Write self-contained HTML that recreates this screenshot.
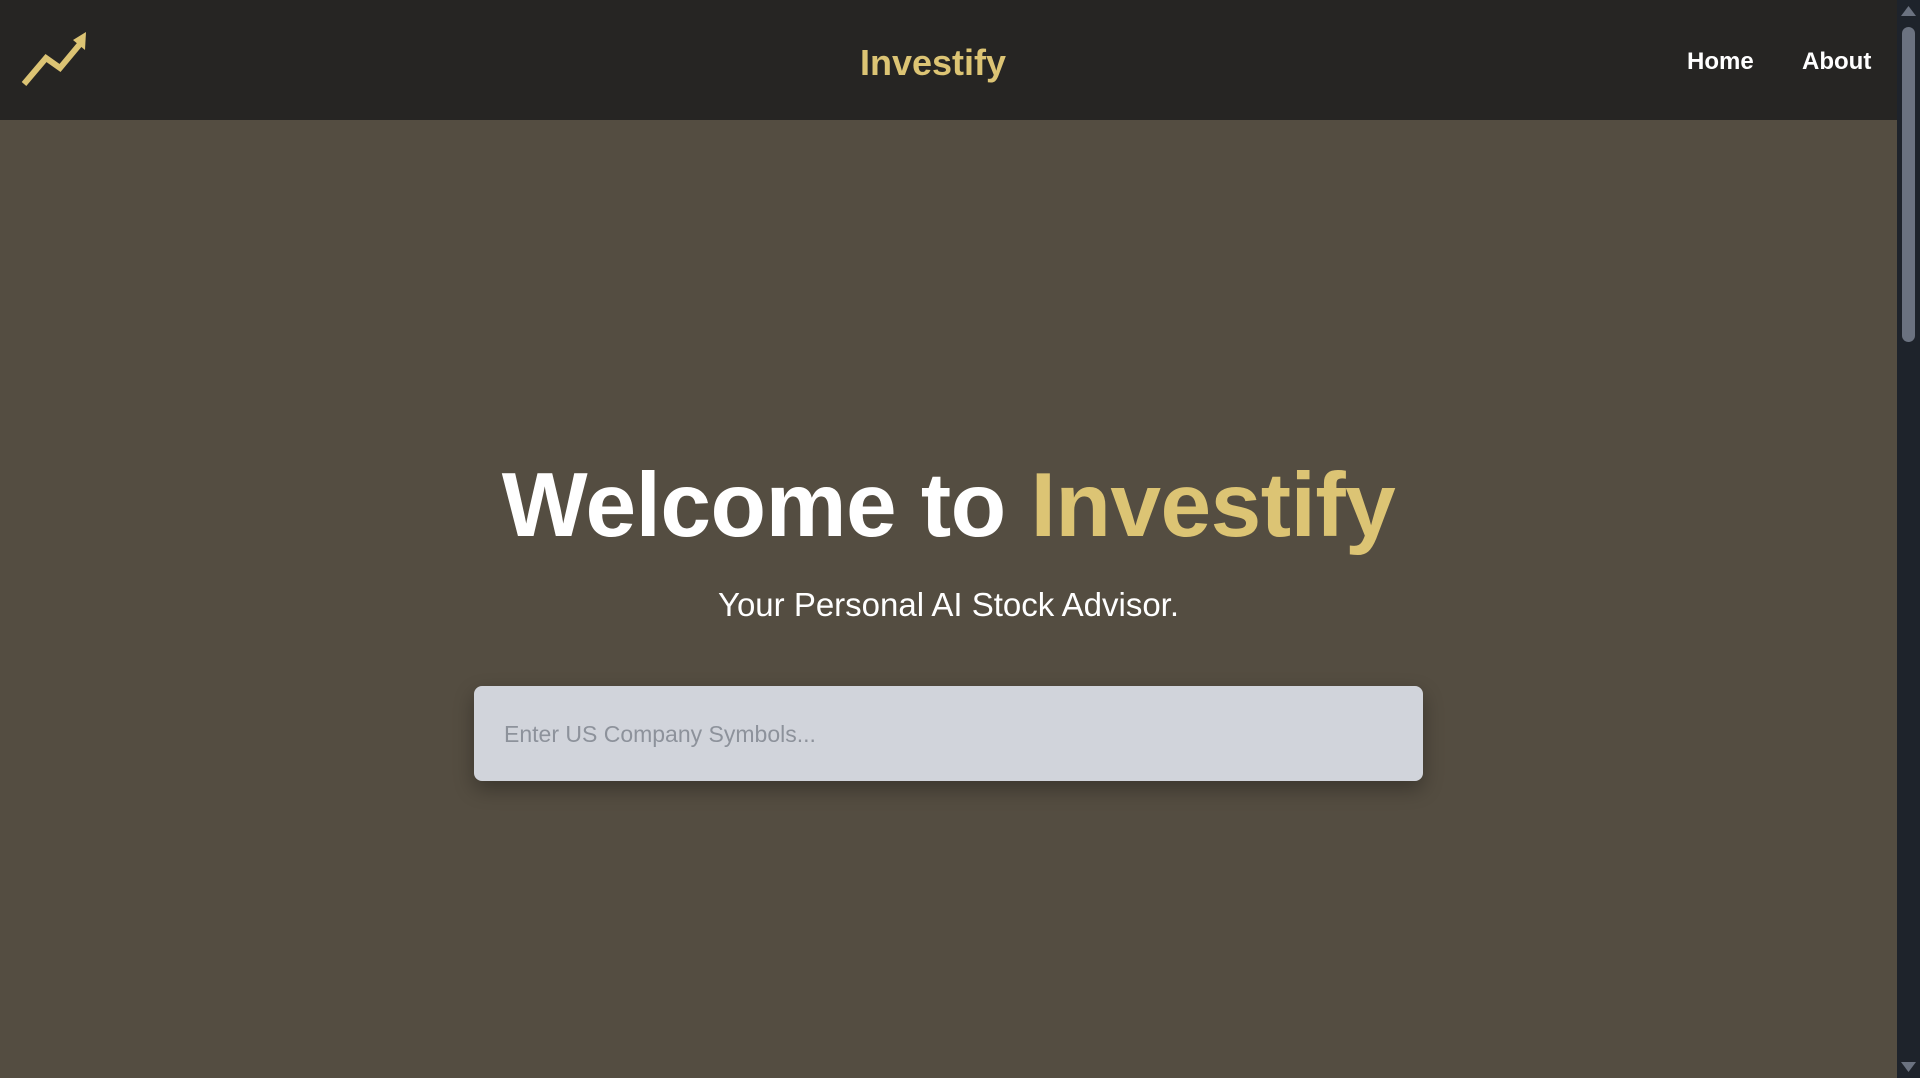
<!DOCTYPE html>
<html><head><style>
*{margin:0;padding:0;box-sizing:border-box}
body{width:1920px;height:1078px;overflow:hidden;background:#544d41;font-family:"Liberation Sans",sans-serif;position:relative}
header{position:absolute;left:0;top:0;width:1897px;height:120px;background:#262523}
.title{position:absolute;left:0;width:1866px;text-align:center;top:42px;font-size:36px;font-weight:bold;color:#dcc474}
.nav{position:absolute;top:48px;font-size:24px;font-weight:bold;color:#fff}
h1{position:absolute;left:0;width:1897px;text-align:center;top:454px;font-size:91px;font-weight:bold;color:#fff;letter-spacing:-0.5px}
h1 span{color:#dcc474}
.sub{position:absolute;left:0;width:1897px;text-align:center;top:586px;font-size:33px;color:#fff;font-weight:300}
.input{position:absolute;left:474px;top:686px;width:949px;height:95px;background:#d1d4db;border-radius:8px;box-shadow:0 8px 20px rgba(0,0,0,.3);font-size:23px;color:#8d929b;padding-left:30px;line-height:97px}
.sb{position:absolute;left:1897px;top:0;width:23px;height:1078px;background:#1e232b}
.thumb{position:absolute;left:1902px;top:27px;width:13px;height:315px;background:#6b7280;border-radius:7px}
</style></head><body>
<header>
<svg style="position:absolute;left:0;top:0" width="100" height="100" viewBox="0 0 100 100">
<polyline points="24,84 46,58 60,68 80,44" fill="none" stroke="#dcc474" stroke-width="6"/>
<polygon points="86,32 85,50 73,40" fill="#dcc474"/>
</svg>
<div class="title">Investify</div>
<div class="nav" style="left:1687px">Home</div>
<div class="nav" style="left:1802px">About</div>
</header>
<h1>Welcome to <span>Investify</span></h1>
<div class="sub">Your Personal AI Stock Advisor.</div>
<div class="input">Enter US Company Symbols...</div>
<div class="sb"></div>
<div class="thumb"></div>
<svg style="position:absolute;left:1901px;top:6px" width="15" height="10"><polygon points="7.5,0 15,10 0,10" fill="#6b7280"/></svg>
<svg style="position:absolute;left:1901px;top:1062px" width="15" height="10"><polygon points="0,0 15,0 7.5,10" fill="#6b7280"/></svg>
</body></html>
